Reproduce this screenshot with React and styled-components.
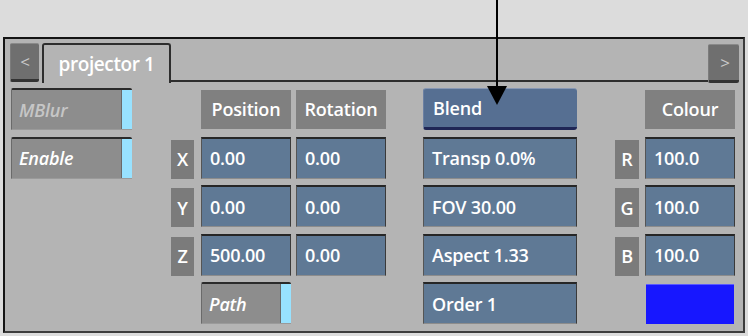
import styled, { createGlobalStyle } from "styled-components";

const Global = createGlobalStyle`
    html, body{
        margin: 0;
        padding: 0;
        background: #dcdcdc;
    }
    body{
        font-family: "Open Sans", "DejaVu Sans", sans-serif;
    }
`

const cols = "121px 39px 23px 7px 90px 5px 90px 37px 154px 38px 24px 6px 90px";

const App = ()=>{
    return(
        <Page>
            <Global />
            <Arrow width="24" height="106" viewBox="0 0 24 106">
                <line x1="12" y1="0" x2="12" y2="90" stroke="#000" strokeWidth="2" />
                <polygon points="2,86 22,86 12,105" fill="#000" />
            </Arrow>
            <Frame>
                <TabBar>
                    <NavButton>&lt;</NavButton>
                    <Tab>projector 1</Tab>
                    <TabLine />
                    <NavButton $right>&gt;</NavButton>
                </TabBar>
                <Grid>
                    <Toggle $col={1} $row={1} $dim>MBlur<Strip /></Toggle>
                    <Toggle $col={1} $row={2}>Enable<Strip /></Toggle>

                    <Header $col={5} $row={1}>Position</Header>
                    <Header $col={7} $row={1}>Rotation</Header>

                    <Axis $col={3} $row={2}>X</Axis>
                    <Field $col={5} $row={2}>0.00</Field>
                    <Field $col={7} $row={2}>0.00</Field>
                    <Axis $col={3} $row={3}>Y</Axis>
                    <Field $col={5} $row={3}>0.00</Field>
                    <Field $col={7} $row={3}>0.00</Field>
                    <Axis $col={3} $row={4}>Z</Axis>
                    <Field $col={5} $row={4}>500.00</Field>
                    <Field $col={7} $row={4}>0.00</Field>
                    <Toggle $col={5} $row={5}>Path<Strip /></Toggle>

                    <Blend $col={9} $row={1}>Blend</Blend>
                    <Field $col={9} $row={2}>Transp 0.0%</Field>
                    <Field $col={9} $row={3}>FOV 30.00</Field>
                    <Field $col={9} $row={4}>Aspect 1.33</Field>
                    <Field $col={9} $row={5}>Order 1</Field>

                    <Header $col={13} $row={1}>Colour</Header>
                    <Axis $col={11} $row={2}>R</Axis>
                    <Field $col={13} $row={2}>100.0</Field>
                    <Axis $col={11} $row={3}>G</Axis>
                    <Field $col={13} $row={3}>100.0</Field>
                    <Axis $col={11} $row={4}>B</Axis>
                    <Field $col={13} $row={4}>100.0</Field>
                    <Swatch $col={13} $row={5} />
                </Grid>
            </Frame>
        </Page>
    )
}
export default App;

const Page = styled.div`
    position: relative;
    width: 748px;
    height: 336px;
    padding: 37px 3px 3px 3px;
    box-sizing: border-box;
`
const Arrow = styled.svg`
    position: absolute;
    left: 485px;
    top: 0;
    z-index: 5;
`
const Frame = styled.div`
    width: 742px;
    height: 296px;
    box-sizing: border-box;
    background: #b4b4b4;
    border: 2px solid #141414;
    border-right-color: #3c3c3c;
    border-bottom-color: #3c3c3c;
    color: #fff;
    font-size: 18px;
    font-weight: 600;
    letter-spacing: -0.2px;
`
const TabBar = styled.div`
    display: flex;
    align-items: flex-end;
    height: 44px;
    padding: 0 4px 0 5px;
`
const NavButton = styled.div`
    width: 28px;
    height: 35px;
    margin-bottom: ${p => p.$right ? '0' : '1px'};
    display: flex;
    align-items: center;
    justify-content: center;
    background: #6f6f6f;
    border-top: 1px solid #8a8a8a;
    border-left: 1px solid #7c7c7c;
    border-bottom: 3px solid #333;
    border-radius: 2px;
    color: #c9c9c9;
    font-size: 17px;
    font-weight: 400;
    padding-left: ${p => p.$right ? '2px' : '0'};
`
const Tab = styled.div`
    width: 125px;
    height: 38px;
    margin-left: 3px;
    box-sizing: content-box;
    display: flex;
    align-items: center;
    justify-content: center;
    border: 2px solid #2e2e2e;
    border-bottom: none;
    border-radius: 3px 3px 0 0;
    font-size: 19px;
    font-weight: 600;
    letter-spacing: -0.4px;
`
const TabLine = styled.div`
    flex: 1;
    align-self: stretch;
    border-bottom: 2px solid #2e2e2e;
    margin-bottom: 1px;
`
const Grid = styled.div`
    display: grid;
    grid-template-columns: ${cols};
    grid-auto-rows: 42px;
    row-gap: 6.5px;
    padding: 5px 0 0 6px;
`
const Cell = styled.div`
    grid-column: ${p => p.$col};
    grid-row: ${p => p.$row};
    box-sizing: border-box;
    display: flex;
    align-items: center;
    white-space: nowrap;
`
const Header = styled(Cell)`
    align-self: center;
    height: 39px;
    justify-content: center;
    background: #808080;
`
const Axis = styled(Cell)`
    align-self: end;
    height: 39px;
    justify-content: center;
    background: #7b7b7b;
`
const Field = styled(Cell)`
    padding-left: 8px;
    background: #5f7995;
    border-top: 2px solid #262626;
    border-left: 1px solid #555;
    border-right: 1px solid #3a3a3a;
    border-bottom: 1px solid #8c8c8c;
`
const Toggle = styled(Cell)`
    position: relative;
    padding-left: 7px;
    background: #8d8d8d;
    border-top: 2px solid #2a2a2a;
    border-left: 1px solid #6a6a6a;
    border-bottom: 1px solid #9a9a9a;
    border-radius: 2px 2px 0 0;
    font-style: italic;
    color: ${p => p.$dim ? '#c6c6c6' : '#fff'};
`
const Strip = styled.span`
    position: absolute;
    right: 0;
    top: 0;
    bottom: 0;
    width: 10px;
    background: #98e2ff;
    border-left: 1px solid #6a6a6a;
`
const Blend = styled(Cell)`
    padding-left: 9px;
    background: #566f92;
    border-top: 1px solid #8797b4;
    border-left: 1px solid #6c80a2;
    border-bottom: 3px solid #1f2656;
    border-radius: 3px;
`
const Swatch = styled(Cell)`
    align-self: end;
    height: 40px;
    margin: 0 1px;
    background: #1717ff;
    border-top: 1px solid #5a5aff;
`
